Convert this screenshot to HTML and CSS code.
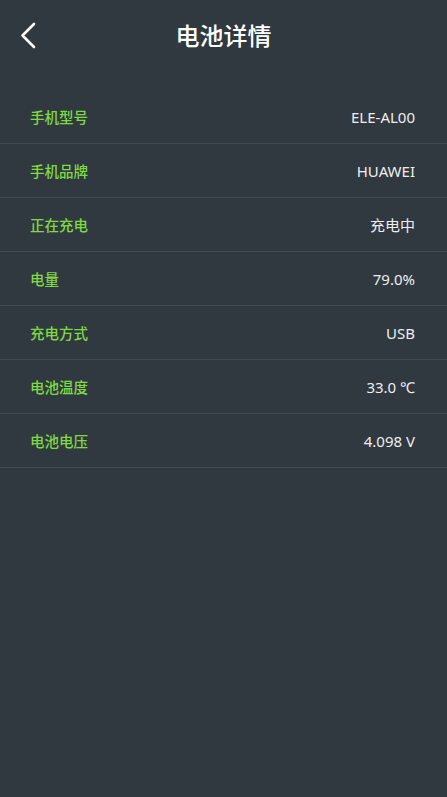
FILE: index.html
```html
<!DOCTYPE html>
<html lang="zh">
<head>
<meta charset="utf-8">
<link rel="stylesheet" href="styles.css">
</head>
<body>
<div class="page">
  <header class="topbar">
    <svg class="back" width="20" height="30" viewBox="0 0 20 30"><path d="M14 3 L2.5 14.5 L14 26" fill="none" stroke="#ffffff" stroke-width="2.6" stroke-linecap="round" stroke-linejoin="round"/></svg>
    <h1 class="title">电池详情</h1>
  </header>
  <ul class="list">
    <li class="row"><span class="label">手机型号</span><span class="value">ELE-AL00</span></li>
    <li class="row"><span class="label">手机品牌</span><span class="value">HUAWEI</span></li>
    <li class="row"><span class="label">正在充电</span><span class="value">充电中</span></li>
    <li class="row"><span class="label">电量</span><span class="value">79.0%</span></li>
    <li class="row"><span class="label">充电方式</span><span class="value">USB</span></li>
    <li class="row"><span class="label">电池温度</span><span class="value">33.0 ℃</span></li>
    <li class="row"><span class="label">电池电压</span><span class="value">4.098 V</span></li>
  </ul>
</div>
</body>
</html>
```
FILE: styles.css
```css
html, body {
  margin: 0;
  padding: 0;
  background: #313940;
}
body {
  font-family: "Noto Sans", "Noto Sans CJK SC", sans-serif;
  color: #f2f2f2;
}
.page {
  width: 447px;
  min-height: 797px;
  background: #313940;
}
.topbar {
  position: relative;
  height: 72px;
  display: flex;
  align-items: center;
  justify-content: center;
}
.back {
  position: absolute;
  left: 20px;
  top: 21px;
}
.title {
  margin: 0 0 2px;
  font-size: 24px;
  font-weight: 500;
  color: #ffffff;
  font-family: "Noto Sans CJK SC", sans-serif;
  line-height: 1;
}
.list {
  list-style: none;
  margin: 18px 0 0;
  padding: 0;
}
.row {
  height: 53px;
  border-bottom: 1px solid #414a50;
  display: flex;
  align-items: center;
  justify-content: space-between;
  padding: 0 32px 0 30px;
}
.label {
  font-family: "Noto Sans CJK SC", sans-serif;
  font-size: 14.5px;
  font-weight: 500;
  color: #7fd944;
}
.value {
  font-family: "Noto Sans", "Noto Sans CJK SC", sans-serif;
  font-size: 15px;
  color: #eeeeee;
}
```
